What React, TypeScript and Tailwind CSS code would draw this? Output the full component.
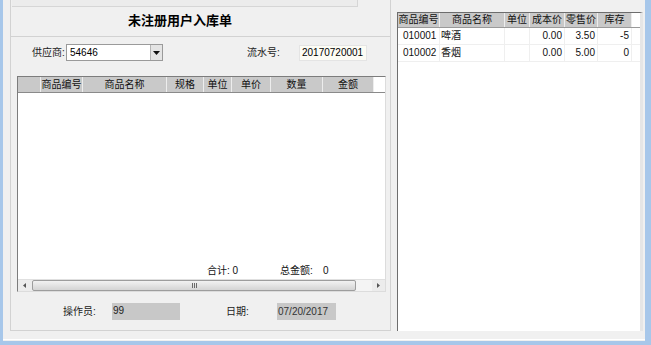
import React from 'react';

const leftCols = [
  { w: 'w-[23px]', t: '' },
  { w: 'w-[42px]', t: '商品编号' },
  { w: 'w-[84px]', t: '商品名称' },
  { w: 'w-[37px]', t: '规格' },
  { w: 'w-[28px]', t: '单位' },
  { w: 'w-[39px]', t: '单价' },
  { w: 'w-[52px]', t: '数量' },
  { w: 'w-[51px]', t: '金额' },
];

const rightCols = [
  { w: 'w-[42px]', t: '商品编号' },
  { w: 'w-[65px]', t: '商品名称' },
  { w: 'w-[25px]', t: '单位' },
  { w: 'w-[35px]', t: '成本价' },
  { w: 'w-[33px]', t: '零售价' },
  { w: 'w-[34px]', t: '库存' },
];

const goods = [
  { code: '010001', name: '啤酒', unit: '', cost: '0.00', price: '3.50', stock: '-5' },
  { code: '010002', name: '香烟', unit: '', cost: '0.00', price: '5.00', stock: '0' },
];

function HeaderCell({ w, t }: { w: string; t: string }) {
  return (
    <div className={`${w} h-full shrink-0 bg-[#c9c9c9] border-r border-[#ededed] flex items-center justify-center text-[#111]`}>
      {t}
    </div>
  );
}

export default function App() {
  return (
    <div
      className="w-[651px] h-[345px] bg-[#f0f0f0] border-l-[3px] border-r-[6px] border-b-[4px] border-[#a7c7ea] overflow-hidden text-[10px] leading-none text-[#222]"
      style={{ fontFamily: '"Liberation Sans", "Noto Sans CJK SC", sans-serif' }}
    >
      <div className="flex h-[340px] border-b border-white">
        {/* left form */}
        <div className="ml-[7px] w-[381px] h-[331px] flex flex-col">
          <div className="h-[37px] border-l border-r border-b border-[#d2d2d2] shrink-0">
            <div className="ml-[1px] w-[346px] h-[7px] border-r border-b border-[#d6d6d6] bg-[#ececec]" />
            <div className="ml-[117px] mt-[7px] text-[13px] font-bold text-black leading-[14px]">未注册用户入库单</div>
          </div>

          <div className="flex-1 border-l border-r border-b border-[#d2d2d2] flex flex-col">
            {/* supplier row */}
            <div className="mt-[7px] h-[17px] flex items-center">
              <div className="ml-[21px] w-[34px]">供应商:</div>
              <div className="w-[97px] h-[17px] bg-white border border-[#9a9a9a] flex items-center">
                <div className="flex-1 pl-[3px] text-[10px] text-black">54646</div>
                <div className="w-[12px] h-[15px] bg-[#e4e4e4] border-l border-[#b5b5b5] flex items-center justify-center">
                  <svg width="7" height="4" viewBox="0 0 7 4">
                    <path d="M0 0h7L3.5 4z" fill="#111" />
                  </svg>
                </div>
              </div>
              <div className="ml-[84px] w-[52px]">流水号:</div>
              <div className="w-[68px] h-[16px] bg-[#fcfcf4] border border-[#e4e4e4] flex items-center pl-[2px] text-black">20170720001</div>
            </div>

            {/* detail grid */}
            <div className="ml-[6px] mt-[15px] w-[369px] h-[216px] border-l border-t border-[#7c7c7c] border-r border-b border-r-[#dcdcdc] border-b-[#dcdcdc] bg-white flex flex-col">
              <div className="h-[16px] flex border-b border-[#8a8a8a] shrink-0">
                {leftCols.map((c, i) => (
                  <HeaderCell key={i} w={c.w} t={c.t} />
                ))}
              </div>
              <div className="flex-1 flex flex-col justify-end">
                <div className="h-[14px] flex items-center pl-[189px] mb-[1px] text-[#111]">
                  <span className="w-[73px]">合计: 0</span>
                  <span className="w-[43px]">总金额:</span>
                  <span>0</span>
                </div>
              </div>
              <div className="h-[12px] flex bg-[#ececec] shrink-0 border-t border-[#e0e0e0]">
                <div className="w-[13px] flex items-center justify-center">
                  <svg width="3" height="5" viewBox="0 0 3 5">
                    <path d="M3 0v5L0 2.5z" fill="#555" />
                  </svg>
                </div>
                <div className="ml-[1px] w-[324px] h-full rounded-[2px] border border-[#9d9d9d] bg-gradient-to-b from-[#f2f2f2] to-[#d4d4d4] flex items-center justify-center gap-[1px]">
                  <div className="w-[1px] h-[5px] bg-[#6a6a6a]" />
                  <div className="w-[1px] h-[5px] bg-[#6a6a6a]" />
                  <div className="w-[1px] h-[5px] bg-[#6a6a6a]" />
                </div>
                <div className="flex-1 bg-[#f4f4f4]" />
                <div className="w-[13px] flex items-center justify-center">
                  <svg width="3" height="5" viewBox="0 0 3 5">
                    <path d="M0 0v5L3 2.5z" fill="#555" />
                  </svg>
                </div>
              </div>
            </div>

            {/* bottom row */}
            <div className="mt-[11px] h-[17px] flex">
              <div className="ml-[52px] w-[49px] flex items-center">操作员:</div>
              <div className="w-[68px] h-full bg-[#c8c8c8] pl-[1px] pt-[3px] text-[#222]">99</div>
              <div className="ml-[46px] w-[51px] flex items-center">日期:</div>
              <div className="w-[59px] h-full bg-[#c8c8c8] pl-[1px] flex items-center text-[#333]">07/20/2017</div>
            </div>
          </div>
        </div>

        {/* goods grid */}
        <div className="ml-[6px] mt-[12px] w-[246px] h-[319px] bg-white border-l border-t border-[#6d6d6d] border-r-[3px] border-r-[#e6e6e6] flex flex-col">
          <div className="h-[15px] flex shrink-0 border-b border-[#9a9a9a]">
            {rightCols.map((c, i) => (
              <HeaderCell key={i} w={c.w} t={c.t} />
            ))}
          </div>
          {goods.map((g) => (
            <div key={g.code} className="h-[17px] flex border-b border-[#efefef] text-[#111]">
              <div className="w-[42px] flex items-center pl-[5px] border-r border-[#efefef]">{g.code}</div>
              <div className="w-[65px] flex items-center pl-[1px] border-r border-[#efefef]">{g.name}</div>
              <div className="w-[25px] border-r border-[#efefef]">{g.unit}</div>
              <div className="w-[35px] flex items-center justify-end pr-[2px] border-r border-[#efefef]">{g.cost}</div>
              <div className="w-[33px] flex items-center justify-end pr-[2px] border-r border-[#efefef]">{g.price}</div>
              <div className="w-[34px] flex items-center justify-end pr-[2px] border-r border-[#efefef]">{g.stock}</div>
            </div>
          ))}
          <div className="flex-1" />
        </div>
      </div>
    </div>
  );
}
